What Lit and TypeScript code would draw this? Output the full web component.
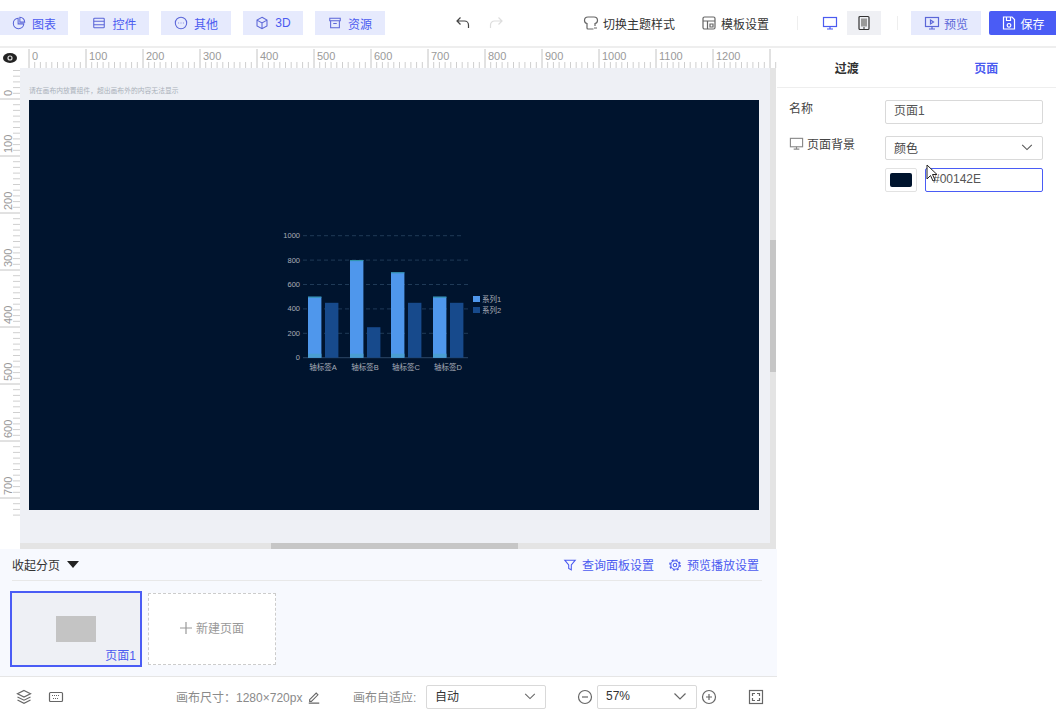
import { LitElement, css, html, svg } from 'lit';
import { customElement } from 'lit/decorators.js';

const MAJOR = 57;
const range = (n: number) => Array.from({ length: n }, (_, i) => i);

const icons = {
  chart: svg`<path d="M7 2.500a6 6 0 1 0 6.500 6.500H7z"/><path d="M9 1.500a5.500 5.500 0 0 1 5.500 5.500H9z"/>`,
  table: svg`<rect x="2" y="2.500" width="12" height="11" rx="1"/><path d="M2 6h12M2 10h12"/>`,
  other: svg`<circle cx="8" cy="8" r="6.500"/><path d="M5 8h.8M7.600 8h.8M10.200 8h.8"/>`,
  cube: svg`<path d="M8 1.500l5.700 3.200v6.600L8 14.500l-5.700-3.200V4.700zM2.300 4.700L8 8l5.700-3.300M8 8v6.500"/>`,
  box: svg`<path d="M2 2.500h12v3H2zM3 5.500v8h10v-8M6 8.500h4"/>`,
  undo: svg`<path d="M5.500 2.500L2 6l3.500 3.500M2 6h7.500a4 4 0 0 1 4 4v3"/>`,
  redo: svg`<path d="M10.500 2.500L14 6l-3.500 3.500M14 6H6.500a4 4 0 0 0-4 4v3"/>`,
  shirt: svg`<path d="M5 2C3 2 1.500 3.500 1.500 5.500c0 1.500 1 2.700 2.500 3v4.500a1 1 0 0 0 1 1h5.500M11 2c2 0 3.500 1.500 3.500 3.500 0 1.500-1 2.700-2.500 3V11M5 2h6M11 13h3"/>`,
  template: svg`<rect x="2" y="2" width="12" height="12" rx="1.500"/><path d="M2 6h12M6.500 6v8M9 9h3v3H9z"/>`,
  monitor: svg`<rect x="1.500" y="2.500" width="13" height="9"/><path d="M8 11.500v2.500M5 14h6"/>`,
  tablet: svg`<rect x="3" y="1.500" width="10" height="13" rx="1"/><rect x="5" y="3.500" width="6" height="8" fill="#999" stroke="none"/><path d="M7 13h2"/>`,
  preview: svg`<rect x="1.500" y="2.500" width="13" height="9"/><path d="M8 11.500v2.500M5 14h6M6.500 5l3 2-3 2z"/>`,
  save: svg`<path d="M2.500 2h8.500l2.500 2.500V14h-11zM5.500 2v3.500h4V2M8 8.500a1.800 1.800 0 1 0 .01 0z"/>`,
  filter: svg`<path d="M2 2.500h12L9.500 8v5.500l-3-1.500V8z"/>`,
  gear: svg`<circle cx="8" cy="8" r="4.800"/><circle cx="8" cy="8" r="5.900" stroke-width="1.600" stroke-dasharray="2.300 2.330"/><circle cx="8" cy="8" r="2"/>`,
  layers: svg`<path d="M8 1.500l6.500 3.300L8 8 1.500 4.800zM1.500 8L8 11.200 14.500 8M1.500 11L8 14.300 14.500 11"/>`,
  keyboard: svg`<rect x="1.500" y="3.500" width="13" height="9" rx="1"/><path d="M4 6.500h8M5 9.500h6" stroke-dasharray="1 1"/>`,
  pencil: svg`<path d="M3 11l7.500-7.500 2 2L5 13H3zM2 15h12"/>`,
  minus: svg`<circle cx="8" cy="8" r="6.500"/><path d="M5 8h6"/>`,
  plus: svg`<circle cx="8" cy="8" r="6.500"/><path d="M5 8h6M8 5v6"/>`,
  full: svg`<rect x="1.500" y="1.500" width="13" height="13"/><path d="M4.500 7V4.500H7M9 4.500h2.500V7M11.500 9v2.500H9M7 11.500H4.500V9"/>`,
  chevron: svg`<path d="M2.500 5.500L8 11l5.500-5.500"/>`,
};

const icon = (name: keyof typeof icons, size = 16) =>
  html`<svg class="icon" width=${size} height=${size} viewBox="0 0 16 16">${icons[name]}</svg>`;

const bars = [
  [500, 450],
  [800, 250],
  [700, 450],
  [500, 450],
];
const barLefts = [38, 80, 121, 163];

@customElement('app-root')
export class AppRoot extends LitElement {
  static override styles = css`
    :host {
      display: flex;
      flex-direction: column;
      width: 1056px;
      height: 716px;
      overflow: hidden;
      position: relative;
      background: #fff;
      color: #333;
      font-family: 'Liberation Sans', 'Noto Sans CJK SC', sans-serif;
      font-size: 12px;
    }

    .icon {
      fill: none;
      stroke: currentColor;
      stroke-width: 1.2;
      flex: none;
    }

    .topbar {
      display: flex;
      align-items: center;
      height: 48px;
      flex: none;
      border-bottom: 2px solid #eeeeee;
      box-sizing: border-box;
      white-space: nowrap;
    }

    .topbar > * {
      flex: none;
    }

    .tool {
      display: flex;
      align-items: center;
      justify-content: center;
      gap: 6px;
      height: 24px;
      margin-right: 12px;
      background: #e6eafd;
      color: #4b5bf0;
    }

    .tool .icon {
      color: #5b66d8;
    }

    .history {
      display: flex;
      gap: 17px;
      margin-left: 58px;
      color: #444;
    }

    .history .off {
      display: flex;
      color: #ddd;
    }

    .action {
      display: flex;
      align-items: center;
      gap: 4px;
      color: #333;
    }

    .action .icon {
      color: #666;
    }

    .sep {
      width: 1px;
      height: 14px;
      background: #eee;
    }

    .devices {
      display: flex;
      height: 24px;
      width: 68px;
      background: #eff0f4;
      margin-left: 15px;
      color: #333;
    }

    .devices div {
      flex: 1;
      display: flex;
      align-items: center;
      justify-content: center;
    }

    .devices .on {
      background: #fff;
      color: #4b5bf0;
      flex: 0 0 34px;
    }

    .preview,
    .save {
      display: flex;
      align-items: center;
      justify-content: center;
      gap: 4px;
      height: 24px;
    }

    .preview {
      width: 70px;
      margin-left: 13px;
      background: #e6eafd;
      color: #5b66d8;
    }

    .save {
      width: 67px;
      margin-left: 8px;
      background: #4a5cf5;
      color: #fff;
      border-radius: 2px 0 0 2px;
    }

    .body {
      flex: 1;
      display: flex;
      min-height: 0;
    }

    .left {
      width: 777px;
      flex: none;
      display: flex;
      flex-direction: column;
    }

    .ruler-h {
      display: flex;
      height: 20px;
      flex: none;
    }

    .eye {
      width: 20px;
      height: 20px;
      display: flex;
      align-items: center;
      justify-content: center;
      flex: none;
    }

    .ruler-h svg,
    .ruler-v svg {
      display: block;
      flex: none;
    }

    .ruler-h text,
    .ruler-v text {
      font-size: 11px;
      fill: #9a9a9a;
      font-family: 'Liberation Sans', sans-serif;
    }

    .stage {
      display: flex;
      height: 475px;
      flex: none;
    }

    .ruler-v {
      width: 20px;
      flex: none;
    }

    .work {
      width: 750px;
      flex: none;
      box-sizing: border-box;
      background: #eef0f5;
      padding: 17px 0 0 9px;
    }

    .hint {
      height: 15px;
      font-size: 6.800px;
      line-height: 12px;
      color: #aab0ba;
      white-space: nowrap;
    }

    .canvas {
      position: relative;
      width: 730px;
      height: 410px;
      background: #00142e;
    }

    .chart {
      position: absolute;
      left: 241px;
      top: 120px;
    }

    .chart text {
      font-size: 7.500px;
      fill: #a9adb8;
    }

    .vbar {
      width: 6px;
      flex: none;
      background: #e4e4e4;
      padding-top: 172px;
      box-sizing: border-box;
    }

    .vbar div {
      height: 132px;
      background: #c6c6c6;
    }

    .hbar {
      height: 6px;
      flex: none;
      margin-left: 20px;
      width: 756px;
      background: #e4e4e4;
      padding-left: 251px;
      box-sizing: border-box;
    }

    .hbar div {
      width: 247px;
      height: 6px;
      background: #c6c6c6;
    }

    .pages {
      height: 128px;
      flex: none;
      box-sizing: border-box;
      background: #f7f9fe;
      padding: 0 15px 0 10px;
      border-bottom: 1px solid #e6e6e6;
    }

    .pages-head {
      display: flex;
      align-items: center;
      height: 32px;
      box-sizing: border-box;
      margin-left: 2px;
      border-bottom: 1px solid #e8e8e8;
      color: #333;
    }

    .caret {
      width: 0;
      height: 0;
      margin-left: 7px;
      border-left: 6px solid transparent;
      border-right: 6px solid transparent;
      border-top: 7px solid #222;
    }

    .link {
      display: flex;
      align-items: center;
      gap: 5px;
      color: #4b5bf0;
    }

    .link.first {
      margin-left: auto;
    }

    .link + .link {
      margin-left: 14px;
      margin-right: 3px;
    }

    .thumbs {
      display: flex;
      align-items: center;
      gap: 6px;
      margin-top: 10px;
    }

    .thumb {
      position: relative;
      display: flex;
      align-items: center;
      justify-content: center;
      width: 132px;
      height: 76px;
      box-sizing: border-box;
      border: 2px solid #4a5cf5;
      background: #eef0f5;
    }

    .thumb i {
      width: 40px;
      height: 26px;
      background: #c4c4c4;
    }

    .thumb span {
      position: absolute;
      right: 4px;
      bottom: 2px;
      color: #4b5bf0;
    }

    .add {
      display: flex;
      align-items: center;
      justify-content: center;
      gap: 4px;
      width: 128px;
      height: 72px;
      box-sizing: border-box;
      padding-bottom: 3px;
      border: 1px dashed #ccc;
      background: #fff;
      color: #999;
    }

    .footer {
      flex: 1;
      display: flex;
      align-items: center;
      color: #8a8a8a;
      white-space: nowrap;
    }

    .footer .icon {
      color: #666;
    }

    .footer > * {
      flex: none;
    }

    .select {
      display: flex;
      align-items: center;
      justify-content: space-between;
      box-sizing: border-box;
      height: 24px;
      border: 1px solid #d9d9d9;
      border-radius: 2px;
      padding: 0 8px 2px;
      color: #333;
      background: #fff;
    }

    .panel {
      flex: 1;
      display: flex;
      flex-direction: column;
      background: #fff;
    }

    .tabs {
      display: flex;
      height: 40px;
      box-sizing: border-box;
      flex: none;
      border-bottom: 1px solid #eeeeee;
      font-weight: 700;
    }

    .tabs div {
      flex: 1;
      display: flex;
      align-items: center;
      justify-content: center;
    }

    .tabs .on {
      color: #4b5bf0;
    }

    .form {
      display: grid;
      grid-template-columns: 96px 158px;
      align-items: start;
      row-gap: 12px;
      padding: 12px 0 0 12px;
      color: #444;
    }

    .form .label {
      display: flex;
      align-items: center;
      gap: 3px;
      height: 14px;
    }

    .form .monitor {
      display: flex;
      color: #888;
    }

    .field {
      box-sizing: border-box;
      height: 24px;
      border: 1px solid #d9d9d9;
      border-radius: 2px;
      padding: 0 8px;
      line-height: 21px;
      color: #555;
    }

    .form .select {
      color: #444;
    }

    .form .select .icon {
      color: #555;
    }

    .color {
      display: flex;
      gap: 8px;
      grid-column: 2;
      margin-top: -4px;
    }

    .swatch {
      box-sizing: border-box;
      width: 32px;
      height: 24px;
      padding: 4px;
      border: 1px solid #e2e2e2;
      border-radius: 2px;
    }

    .swatch div {
      height: 100%;
      background: #00142e;
      border-radius: 2px;
    }

    .hex {
      flex: 1;
      border-color: #4a5cf5;
      padding-left: 7px;
    }

    .cursor {
      position: absolute;
      left: 926px;
      top: 164px;
    }
  `;

  private _hRuler() {
    return html`<svg width="757" height="20">
      ${range(132).map((i) => {
        const x = 9 + (i * MAJOR) / 10;
        if (i % 10 !== 0) return svg`<path d="M${x} 14V20" stroke="#cfcfcf"/>`;
        return svg`<path d="M${x} 1V20" stroke="#c4c4c4"/>${i < 130 ? svg`<text x=${x + 3} y="12">${i * 10}</text>` : null}`;
      })}
    </svg>`;
  }

  private _vRuler() {
    return html`<svg width="20" height="475">
      ${range(84).map((i) => {
        const y = 31 + ((i - 10) * MAJOR) / 10;
        return i % 10 === 0
          ? svg`<path d="M0 ${y}H20" stroke="#c4c4c4"/><text transform="translate(12 ${y - 3}) rotate(-90)">${i === 0 ? '' : (i - 10) * 10}</text>`
          : svg`<path d="M13 ${y}H20" stroke="#cfcfcf"/>`;
      })}
    </svg>`;
  }

  private _chart() {
    const base = 137.700;
    const h = (v: number) => v * 0.122;
    return html`<svg class="chart" width="240" height="160">
      ${[1000, 800, 600, 400, 200].map((v) => {
        const y = base - h(v);
        return svg`<path d="M33 ${y}H${v === 1000 ? 193 : 198}" stroke="#1f3a57" stroke-dasharray="4 3"/>`;
      })}
      <path d="M33 ${base}H198" stroke="#2c4766" />
      ${[1000, 800, 600, 400, 200, 0].map(
        (v) => svg`<text x="30" y=${base - h(v) + 2.500} text-anchor="end">${v}</text>`,
      )}
      ${bars.map(([a, b], i) => {
        const x = barLefts[i];
        return svg`
          <rect x=${x} y=${base - h(a)} width="13.400" height=${h(a)} fill="#4f97ec"/>
          <rect x=${x} y=${base - h(a)} width="13.400" height="1" fill="#2f95a8"/>
          <rect x=${x} y=${base - 4} width="13.400" height="4" fill="#4a9ed2"/>
          <rect x=${x + 17} y=${base - h(b)} width="13.400" height=${h(b)} fill="#174a8c"/>
          <text x=${x + 15} y="150" text-anchor="middle">轴标签${'ABCD'[i]}</text>`;
      })}
      <rect x="203" y="76" width="7" height="6" fill="#4f97ec" />
      <text x="212" y="81.500">系列1</text>
      <rect x="203" y="87" width="7" height="6" fill="#174a8c" />
      <text x="212" y="92.500">系列2</text>
    </svg>`;
  }

  protected override render() {
    const tools: [keyof typeof icons, string, number][] = [
      ['chart', '图表', 68],
      ['table', '控件', 69],
      ['other', '其他', 70],
      ['cube', '3D', 60],
      ['box', '资源', 70],
    ];
    return html`
      <header class="topbar">
        ${tools.map(
          ([name, label, width]) =>
            html`<div class="tool" style="width:${width}px">${icon(name, 14)}${label}</div>`,
        )}
        <div class="history">${icon('undo')}<span class="off">${icon('redo')}</span></div>
        <div class="action" style="margin-left:79px">${icon('shirt')}切换主题样式</div>
        <div class="action" style="margin-left:26px">${icon('template')}模板设置</div>
        <div class="sep" style="margin-left:28px"></div>
        <div class="devices">
          <div class="on">${icon('monitor')}</div>
          <div>${icon('tablet')}</div>
        </div>
        <div class="sep" style="margin-left:16px"></div>
        <div class="preview">${icon('preview')}预览</div>
        <div class="save">${icon('save')}保存</div>
      </header>

      <div class="body">
        <div class="left">
          <div class="ruler-h">
            <div class="eye">
              <svg width="14" height="10" viewBox="0 0 14 10">
                <ellipse cx="7" cy="5" rx="7" ry="5" fill="#222" />
                <circle cx="7" cy="5" r="2.600" fill="#ddd" />
                <circle cx="7" cy="5" r="1.400" fill="#222" />
              </svg>
            </div>
            ${this._hRuler()}
          </div>
          <div class="stage">
            <div class="ruler-v">${this._vRuler()}</div>
            <div class="work">
              <div class="hint">请在画布内放置组件，超出画布外的内容无法显示</div>
              <div class="canvas">${this._chart()}</div>
            </div>
            <div class="vbar"><div></div></div>
          </div>
          <div class="hbar"><div></div></div>
          <section class="pages">
            <div class="pages-head">
              收起分页<span class="caret"></span>
              <span class="link first">${icon('filter', 14)}查询面板设置</span>
              <span class="link">${icon('gear', 14)}预览播放设置</span>
            </div>
            <div class="thumbs">
              <div class="thumb"><i></i><span>页面1</span></div>
              <div class="add">
                <svg class="icon" width="12" height="12" viewBox="0 0 12 12"><path d="M6 0v12M0 6h12" /></svg>
                新建页面
              </div>
            </div>
          </section>
          <footer class="footer">
            <span style="margin-left:16px;display:flex">${icon('layers')}</span>
            <span style="margin-left:16px;display:flex">${icon('keyboard')}</span>
            <span style="margin-left:112px;width:126px">画布尺寸：1280×720px</span>
            <span style="margin-left:5px;display:flex">${icon('pencil', 14)}</span>
            <span style="margin-left:32px;width:62px">画布自适应:</span>
            <div class="select" style="width:120px;margin-left:11px">自动 ${icon('chevron', 14)}</div>
            <span style="margin-left:31px;display:flex">${icon('minus')}</span>
            <div class="select" style="width:100px;margin-left:4px">57% ${icon('chevron', 16)}</div>
            <span style="margin-left:4px;display:flex">${icon('plus')}</span>
            <span style="margin-left:31px;display:flex">${icon('full')}</span>
          </footer>
        </div>

        <aside class="panel">
          <div class="tabs">
            <div>过渡</div>
            <div class="on">页面</div>
          </div>
          <div class="form">
            <div class="label">名称</div>
            <div class="field">页面1</div>
            <div class="label"><span class="monitor">${icon('monitor', 15)}</span>页面背景</div>
            <div class="select">颜色 ${icon('chevron', 14)}</div>
            <div class="color">
              <div class="swatch"><div></div></div>
              <div class="field hex">#00142E</div>
            </div>
          </div>
        </aside>
      </div>

      <svg class="cursor" width="14" height="20" viewBox="0 0 14 20">
        <path d="M1 1v14l3.500-3.500 2.500 5.500 2-1-2.500-5.500H11z" fill="#fff" stroke="#222" />
      </svg>
    `;
  }
}
